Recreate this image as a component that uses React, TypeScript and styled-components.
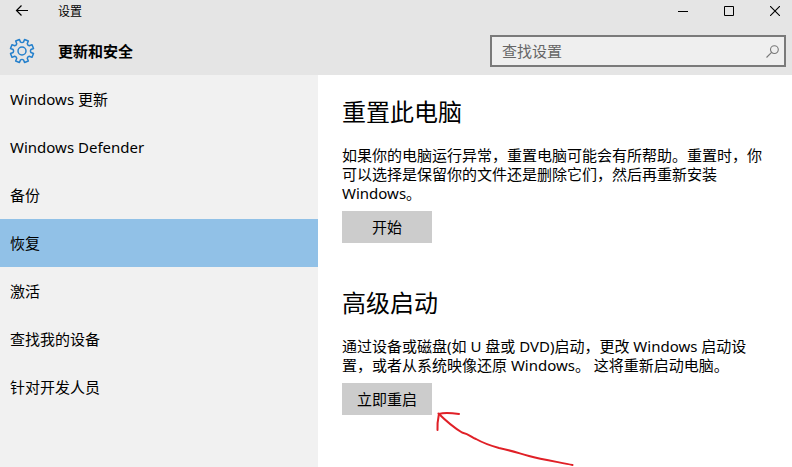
import React, { useState } from 'react';
import styled, { createGlobalStyle } from 'styled-components';

const GlobalStyle = createGlobalStyle`
  *, *::before, *::after { box-sizing: border-box; }
  html, body, #root { height: 100%; }
  body {
    margin: 0;
    background: #fff;
    color: #000;
    font-family: "Noto Sans", "Noto Sans CJK SC", sans-serif;
    font-size: 15px;
    line-height: 19px;
  }
  button, input { font: inherit; color: inherit; border-radius: 0; }
`;

const Window = styled.div`
  display: flex;
  flex-direction: column;
  min-height: 100%;
  overflow: hidden;
`;

const Header = styled.header`
  background: #e5e5e5;
`;

const TitleBar = styled.div`
  display: flex;
  align-items: center;
  height: 22px;
`;

const BarButton = styled.button`
  display: flex;
  align-items: center;
  justify-content: center;
  width: 46px;
  height: 22px;
  padding: 0;
  border: 0;
  background: transparent;
`;

const BackButton = styled(BarButton)`
  width: 44px;
`;

const CloseButton = styled(BarButton)`
  width: 40px;
  padding-left: 6px;
`;

const WindowName = styled.span`
  flex: 1;
  padding-left: 14px;
  font-size: 12px;
`;

const PageBar = styled.div`
  display: flex;
  align-items: center;
  height: 53px;
  padding: 5px 6px 0 9px;
`;

const PageTitle = styled.h1`
  flex: 1;
  margin: 0;
  padding-left: 23px;
  font-size: 15px;
  font-weight: 700;
`;

const SearchBox = styled.label`
  display: flex;
  align-items: center;
  width: 296px;
  height: 32px;
  padding: 0 5px 0 10px;
  border: 2px solid #7a7a7a;
  background: #efefef;
`;

const SearchInput = styled.input`
  flex: 1;
  min-width: 0;
  padding: 0;
  border: 0;
  outline: 0;
  background: transparent;
  &::placeholder { color: #666; opacity: 1; }
`;

const Body = styled.div`
  display: flex;
  flex: 1;
`;

const Sidebar = styled.nav`
  flex: 0 0 318px;
  background: #f1f1f1;
`;

const NavItem = styled.a<{ $active: boolean }>`
  display: flex;
  align-items: center;
  height: 48px;
  padding: 0 10px;
  background: ${(p) => (p.$active ? '#91c1e7' : 'transparent')};
  color: #000;
  text-decoration: none;
`;

const Content = styled.main`
  flex: 1;
  padding: 19px 24px 0;
`;

const Section = styled.section`
  margin-bottom: 42px;
`;

const SectionTitle = styled.h2`
  margin: 0 0 16px;
  font-size: 24px;
  font-weight: 400;
  line-height: 36px;
`;

const Description = styled.p`
  margin: 0 0 8px;
`;

const ActionArea = styled.div`
  position: relative;
  width: 90px;
`;

const ActionButton = styled.button`
  display: block;
  width: 90px;
  height: 32px;
  padding: 0;
  border: 0;
  background: #ccc;
`;

const HandArrow = styled.svg`
  position: absolute;
  top: 26px;
  left: 92px;
  pointer-events: none;
`;

function gearPath(): string {
  const point = (radius: number, degrees: number) => {
    const a = (degrees * Math.PI) / 180;
    return `${(13 + radius * Math.cos(a)).toFixed(2)} ${(13 + radius * Math.sin(a)).toFixed(2)}`;
  };
  const points: string[] = [];
  for (let i = 0; i < 8; i++) {
    const c = 22.5 + i * 45;
    points.push(point(9, c - 13), point(11.8, c - 10), point(11.8, c + 10), point(9, c + 13));
    points.push(point(8.4, c + 22.5));
  }
  return `M${points.join('L')}Z`;
}

const GearIcon = () => (
  <svg width="26" height="26" viewBox="0 0 26 26" fill="none" stroke="#2580cc" strokeWidth="1.5" strokeLinejoin="round" aria-hidden="true">
    <path d={gearPath()} />
    <circle cx="13" cy="13" r="4" />
  </svg>
);

const BackIcon = () => (
  <svg width="14" height="12" viewBox="0 0 14 12" fill="none" stroke="#000" strokeWidth="1.2" aria-hidden="true">
    <path d="M13 5.500H1.500M6.500 .500L1.500 5.500l5 5" />
  </svg>
);

const MinimizeIcon = () => (
  <svg width="10" height="10" viewBox="0 0 10 10" stroke="#000" aria-hidden="true">
    <path d="M0 5.5h10" />
  </svg>
);

const MaximizeIcon = () => (
  <svg width="10" height="10" viewBox="0 0 10 10" fill="none" stroke="#000" aria-hidden="true">
    <path d="M.5.5h9v9h-9z" />
  </svg>
);

const CloseIcon = () => (
  <svg width="10" height="10" viewBox="0 0 10 10" stroke="#000" strokeWidth="1.1" aria-hidden="true">
    <path d="M0 0l10 10M10 0L0 10" />
  </svg>
);

const SearchIcon = () => (
  <svg width="13" height="13" viewBox="0 0 13 13" fill="none" stroke="#777" strokeWidth="1.1" aria-hidden="true">
    <circle cx="8.4" cy="4.6" r="3.9" />
    <path d="M5.6 7.4L.5 12.5" />
  </svg>
);

const navItems = ['Windows 更新', 'Windows Defender', '备份', '恢复', '激活', '查找我的设备', '针对开发人员'];

export default function App() {
  const [active, setActive] = useState('恢复');

  return (
    <>
      <GlobalStyle />
      <Window>
        <Header>
          <TitleBar>
            <BackButton aria-label="返回"><BackIcon /></BackButton>
            <WindowName>设置</WindowName>
            <BarButton aria-label="最小化"><MinimizeIcon /></BarButton>
            <BarButton aria-label="最大化"><MaximizeIcon /></BarButton>
            <CloseButton aria-label="关闭"><CloseIcon /></CloseButton>
          </TitleBar>
          <PageBar>
            <GearIcon />
            <PageTitle>更新和安全</PageTitle>
            <SearchBox>
              <SearchInput type="text" placeholder="查找设置" aria-label="查找设置" />
              <SearchIcon />
            </SearchBox>
          </PageBar>
        </Header>
        <Body>
          <Sidebar>
            {navItems.map((name) => (
              <NavItem
                key={name}
                href="#"
                $active={name === active}
                aria-current={name === active ? 'page' : undefined}
                onClick={(e) => {
                  e.preventDefault();
                  setActive(name);
                }}
              >
                {name}
              </NavItem>
            ))}
          </Sidebar>
          <Content>
            <Section>
              <SectionTitle>重置此电脑</SectionTitle>
              <Description>
                如果你的电脑运行异常，重置电脑可能会有所帮助。重置时，你可以选择是保留你的文件还是删除它们，然后再重新安装 Windows。
              </Description>
              <ActionButton>开始</ActionButton>
            </Section>
            <Section>
              <SectionTitle>高级启动</SectionTitle>
              <Description>
                通过设备或磁盘(如 U 盘或 DVD)启动，更改 Windows 启动设置，或者从系统映像还原 Windows。 这将重新启动电脑。
              </Description>
              <ActionArea>
                <ActionButton>立即重启</ActionButton>
                <HandArrow width="144" height="60" viewBox="0 0 144 60" fill="none" stroke="#e02027" strokeWidth="2" strokeLinecap="round" strokeLinejoin="round" aria-hidden="true">
                  <path d="M138.500 56C127 53.500 108 50.500 95 47C84 44 79 42 65 39C56 36.500 50 34.500 42 30C37 28 36 25.500 28 23.500C19 18 10 10 4.500 4.500" />
                  <path d="M3.500 21C3 14 4 10 5 5C10 3.500 17 4 25 5" />
                </HandArrow>
              </ActionArea>
            </Section>
          </Content>
        </Body>
      </Window>
    </>
  );
}
